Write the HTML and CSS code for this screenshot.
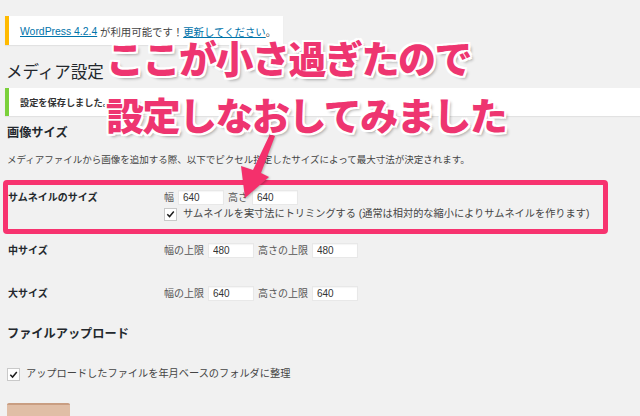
FILE: index.html
```html
<!DOCTYPE html>
<html lang="ja">
<head>
<meta charset="utf-8">
<title>メディア設定</title>
<link rel="stylesheet" href="styles.css">
</head>
<body>
<div class="page">
  <div class="notice notice-update"><a class="link">WordPress 4.2.4</a>&nbsp;が利用可能です！<a class="link">更新してください</a>。</div>
  <h1 class="title">メディア設定</h1>
  <div class="notice notice-saved"><strong>設定を保存しました。</strong></div>
  <h2 class="section">画像サイズ</h2>
  <p class="desc">メディアファイルから画像を追加する際、以下でピクセル指定したサイズによって最大寸法が決定されます。</p>

  <div class="form">
    <div class="row row-thumb">
      <div class="th">サムネイルのサイズ</div>
      <div class="td">
        <div class="fields">
          <span class="lbl">幅</span><input class="num" type="text" value="640">
          <span class="lbl">高さ</span><input class="num" type="text" value="640">
        </div>
        <div class="check">
          <span class="cb"><svg viewBox="0 0 12 12" width="12" height="12"><polyline points="2.5,6.2 5,8.8 9.6,3.2" fill="none" stroke="#1e1e1e" stroke-width="1.6"/></svg></span>
          <span>サムネイルを実寸法にトリミングする (通常は相対的な縮小によりサムネイルを作ります)</span>
        </div>
      </div>
    </div>
    <div class="row row-medium">
      <div class="th">中サイズ</div>
      <div class="td">
        <div class="fields">
          <span class="lbl">幅の上限</span><input class="num" type="text" value="480">
          <span class="lbl">高さの上限</span><input class="num" type="text" value="480">
        </div>
      </div>
    </div>
    <div class="row row-large">
      <div class="th">大サイズ</div>
      <div class="td">
        <div class="fields">
          <span class="lbl">幅の上限</span><input class="num" type="text" value="640">
          <span class="lbl">高さの上限</span><input class="num" type="text" value="640">
        </div>
      </div>
    </div>
  </div>

  <h2 class="section section-upload">ファイルアップロード</h2>
  <div class="check check-upload">
    <span class="cb"><svg viewBox="0 0 12 12" width="11" height="11"><polyline points="2.5,6.2 5,8.8 9.6,3.2" fill="none" stroke="#1e1e1e" stroke-width="1.6"/></svg></span>
    <span>アップロードしたファイルを年月ベースのフォルダに整理</span>
  </div>
  <div class="button-primary"></div>
</div>

<div class="mark-box"></div>
<svg class="mark-arrow" width="640" height="416" viewBox="0 0 640 416">
  <polygon points="270,134 275,136 261,173 269,177 245,198 241,166 253,170" fill="#f4306c"/>
</svg>
<div class="caption">
  <div>ここが小さ過ぎたので</div>
  <div>設定しなおしてみました</div>
</div>
</body>
</html>
```
FILE: styles.css
```css
html, body {
  margin: 0;
  padding: 0;
}
body {
  width: 640px;
  height: 416px;
  overflow: hidden;
  background: #f1f1f1;
  color: #444;
  font-family: "Liberation Sans", "Noto Sans CJK JP", sans-serif;
  position: relative;
}
.page {
  padding: 16px 0 0 5px;
}
.notice {
  background: #fff;
  box-shadow: 0 1px 1px rgba(0, 0, 0, 0.06);
  box-sizing: border-box;
  padding-left: 11px;
  font-size: 9.6px;
  display: flex;
  align-items: center;
}
.notice-update {
  width: 278px;
  height: 29px;
  border-left: 4px solid #ffba00;
  font-size: 10.4px;
  padding-top: 2px;
}
.link {
  color: #0073aa;
  text-decoration: underline;
}
.title {
  margin: 15px 0 0 1px;
  font-size: 16.5px;
  line-height: 24px;
  font-weight: 400;
  color: #23282d;
}
.notice-saved {
  margin-top: 4px;
  height: 28px;
  border-left: 4px solid #7ad03a;
  font-size: 9.2px;
}
.notice-saved strong {
  font-weight: 700;
  color: #333;
}
.section {
  margin: 8px 0 0 2px;
  font-size: 12.2px;
  line-height: 18px;
  font-weight: 700;
  color: #23282d;
}
.desc {
  margin: 9px 0 0 2px;
  font-size: 9.5px;
  line-height: 18px;
  color: #444;
}
.form {
  margin-top: 21px;
}
.row {
  display: flex;
}
.th {
  width: 159px;
  padding-left: 3px;
  box-sizing: border-box;
  font-size: 10px;
  font-weight: 700;
  line-height: 15px;
  color: #23282d;
}
.td {
  font-size: 10px;
  line-height: 15px;
}
.fields {
  display: flex;
  align-items: center;
  gap: 4px;
  height: 15px;
}
.lbl {
  color: #555;
}
.num {
  width: 46px;
  height: 15px;
  box-sizing: border-box;
  margin: 0;
  padding: 0 4px;
  border: 1px solid #e8e8e8;
  background: #fff;
  font-family: "Liberation Sans", sans-serif;
  font-size: 10px;
  color: #333;
  box-shadow: inset 0 1px 1px rgba(0, 0, 0, 0.04);
}
.check {
  display: flex;
  align-items: center;
  gap: 6px;
  margin-top: 2px;
  font-size: 10.2px;
  line-height: 14px;
  color: #444;
}
.cb {
  width: 11px;
  height: 11px;
  background: #fff;
  border: 1px solid #c9c9c9;
  display: flex;
  align-items: center;
  justify-content: center;
  box-sizing: content-box;
}
.row-medium {
  margin-top: 22px;
}
.row-large {
  margin-top: 28px;
}
.section-upload {
  margin-top: 24px;
}
.check-upload {
  margin: 24px 0 0 2px;
  gap: 6px;
}
.button-primary {
  margin: 22px 0 0 2px;
  width: 63px;
  height: 12px;
  background: #e0bea6;
  border-top: 2px solid #c99e82;
  border-radius: 2px 2px 0 0;
}
.mark-box {
  position: absolute;
  left: 3px;
  top: 180px;
  width: 605px;
  height: 54px;
  box-sizing: border-box;
  border: 5.5px solid #f7336f;
  border-radius: 4px;
}
.mark-arrow {
  position: absolute;
  left: 0;
  top: 0;
  filter: drop-shadow(1px 1px 1px rgba(0, 0, 0, 0.25));
}
.caption {
  position: absolute;
  left: 106px;
  top: 28px;
  font-family: "Noto Sans CJK JP", sans-serif;
  font-weight: 900;
  font-size: 38px;
  line-height: 57px;
  letter-spacing: -1.5px;
  color: #ee3570;
  white-space: nowrap;
  text-shadow:
    2px 0 0 #fff, -2px 0 0 #fff, 0 2px 0 #fff, 0 -2px 0 #fff,
    2px 2px 0 #fff, -2px -2px 0 #fff, 2px -2px 0 #fff, -2px 2px 0 #fff,
    3px 3px 3px rgba(0, 0, 0, 0.3);
}
```
